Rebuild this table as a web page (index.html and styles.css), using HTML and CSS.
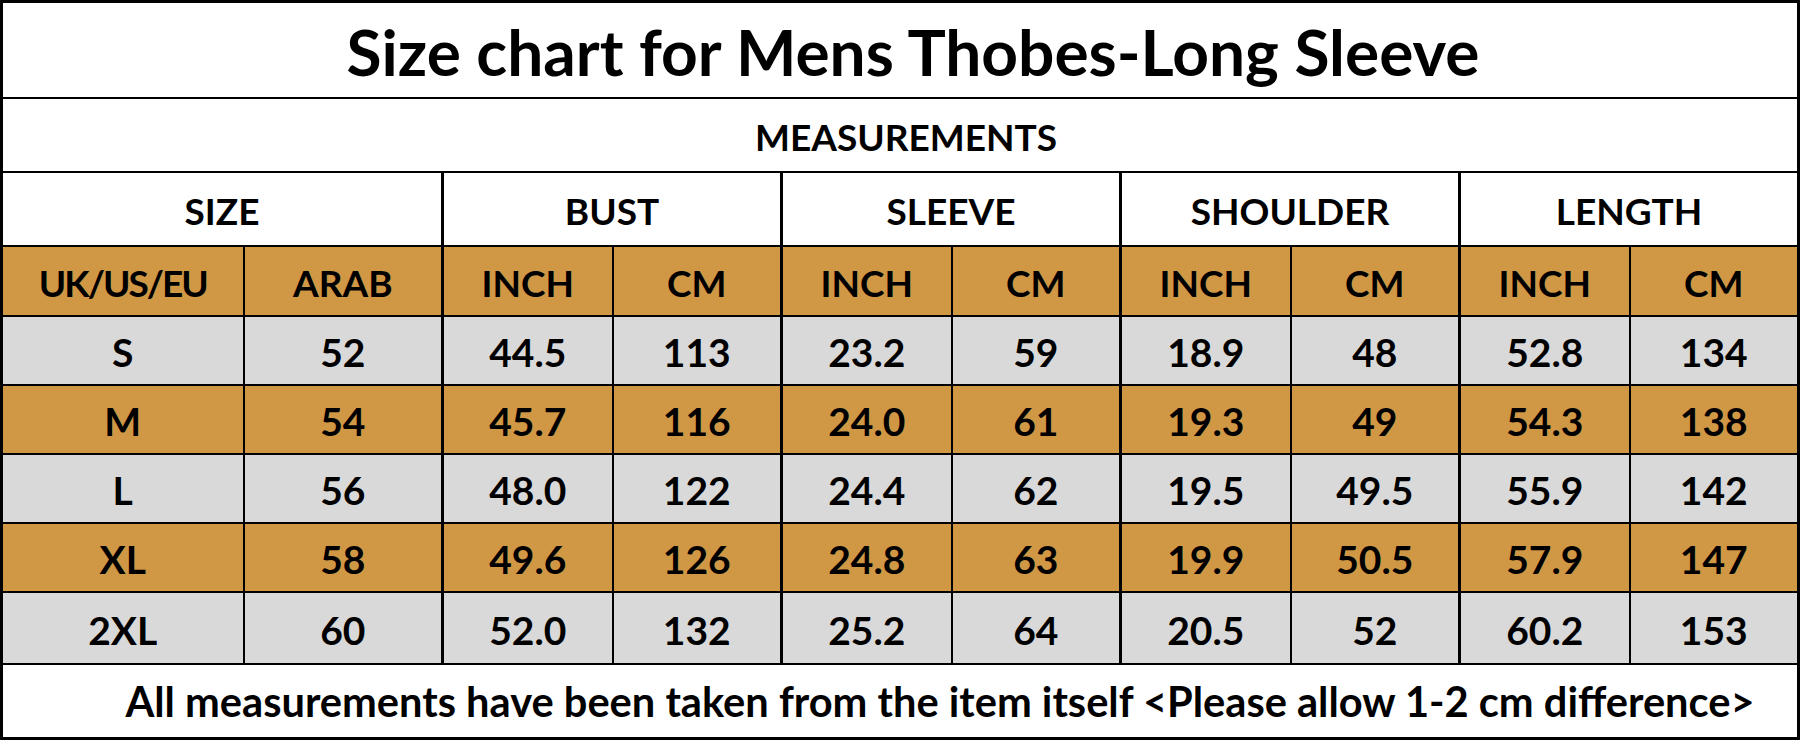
FILE: index.html
```html
<!DOCTYPE html>
<html lang="en">
<head>
<meta charset="utf-8">
<title>Size chart for Mens Thobes-Long Sleeve</title>
<link rel="stylesheet" href="styles.css">
</head>
<body>
<table class="chart">
  <colgroup>
    <col class="c-uk"><col class="c-arab">
    <col class="c-a"><col class="c-b">
    <col class="c-a"><col class="c-b">
    <col class="c-a"><col class="c-b">
    <col class="c-a"><col class="c-b">
  </colgroup>
  <tbody>
    <tr class="r-title"><td colspan="10" class="title">Size chart for Mens Thobes-Long Sleeve</td></tr>
    <tr class="r-meas"><td colspan="10" class="meas">MEASUREMENTS</td></tr>
    <tr class="r-group">
      <td colspan="2" class="grp">SIZE</td>
      <td colspan="2" class="grp">BUST</td>
      <td colspan="2" class="grp">SLEEVE</td>
      <td colspan="2" class="grp">SHOULDER</td>
      <td colspan="2" class="grp">LENGTH</td>
    </tr>
    <tr class="r-sub orange">
      <td class="tight">UK/US/EU</td><td class="end">ARAB</td>
      <td>INCH</td><td class="end">CM</td>
      <td>INCH</td><td class="end">CM</td>
      <td>INCH</td><td class="end">CM</td>
      <td>INCH</td><td>CM</td>
    </tr>
    <tr class="r-data gray">
      <td>S</td><td class="end">52</td><td>44.5</td><td class="end">113</td><td>23.2</td><td class="end">59</td><td>18.9</td><td class="end">48</td><td>52.8</td><td>134</td>
    </tr>
    <tr class="r-data orange">
      <td>M</td><td class="end">54</td><td>45.7</td><td class="end">116</td><td>24.0</td><td class="end">61</td><td>19.3</td><td class="end">49</td><td>54.3</td><td>138</td>
    </tr>
    <tr class="r-data gray">
      <td>L</td><td class="end">56</td><td>48.0</td><td class="end">122</td><td>24.4</td><td class="end">62</td><td>19.5</td><td class="end">49.5</td><td>55.9</td><td>142</td>
    </tr>
    <tr class="r-data orange">
      <td>XL</td><td class="end">58</td><td>49.6</td><td class="end">126</td><td>24.8</td><td class="end">63</td><td>19.9</td><td class="end">50.5</td><td>57.9</td><td>147</td>
    </tr>
    <tr class="r-data gray r-last">
      <td>2XL</td><td class="end">60</td><td>52.0</td><td class="end">132</td><td>25.2</td><td class="end">64</td><td>20.5</td><td class="end">52</td><td>60.2</td><td>153</td>
    </tr>
    <tr class="r-foot"><td colspan="10" class="foot">All measurements have been taken from the item itself &lt;Please allow 1-2 cm difference&gt;</td></tr>
  </tbody>
</table>
</body>
</html>
```
FILE: styles.css
```css
html, body {
  margin: 0;
  padding: 0;
  background: #ffffff;
}

.chart {
  width: 1800px;
  border-collapse: collapse;
  table-layout: fixed;
  border: 3px solid #000;
  font-family: "Lato", "Liberation Sans", sans-serif;
  font-weight: 700;
  color: #000;
}

.c-uk { width: 242px; }
.c-arab { width: 199px; }
.c-a { width: 170px; }
.c-b { width: 169px; }

.chart td {
  border: 2px solid #000;
  text-align: center;
  vertical-align: middle;
  padding: 0;
  font-size: 39px;
  line-height: 1;
  white-space: nowrap;
}

.chart td.end,
.chart td.grp {
  border-right-width: 3px;
}

.r-title td { height: 91px; padding-top: 3px; }
.r-meas td { height: 69px; padding-top: 3px; }
.r-group td { height: 69px; padding-top: 3px; }
.r-sub td { height: 65px; padding-top: 3px; }
.r-data td { height: 63px; padding-top: 4px; }
.r-last td { height: 66px; }
.r-foot td { height: 70px; padding-top: 2px; }

.chart td.title {
  font-size: 64px;
  padding-left: 26px;
}

.chart td.meas {
  font-size: 37px;
  padding-left: 12px;
}

.r-group td,
.r-sub td {
  font-size: 37px;
}

.chart td.tight {
  letter-spacing: -2px;
}

.chart td.foot {
  font-size: 41.6px;
  padding-left: 80px;
}

.orange td { background: #d09745; }
.gray td { background: #d9d9d9; }
```
